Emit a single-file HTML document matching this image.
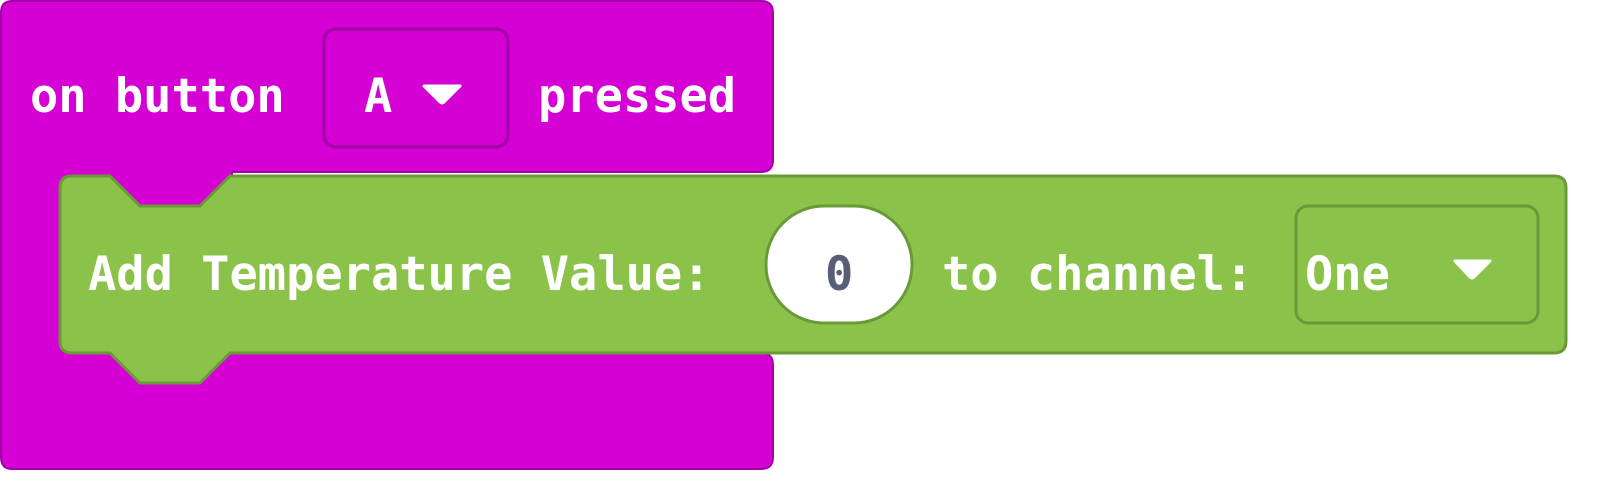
<!DOCTYPE html>
<html><head><style>
html,body{margin:0;padding:0;background:#fff;width:1600px;height:481px;overflow:hidden}
text{font-family:"DejaVu Sans Mono","Liberation Mono",monospace;font-weight:bold;font-size:47px;fill:#fff}
</style></head><body>
<svg width="1600" height="481" viewBox="0 0 1600 481" xmlns="http://www.w3.org/2000/svg">
<path d="M12,1 H761 Q773,1 773,13 V160 Q773,172 761,172 H232 V353 H761 Q773,353 773,365 V457 Q773,469 761,469 H12 Q1,469 1,457 V13 Q1,1 12,1 Z" fill="#d400d4" stroke="#a300a8" stroke-width="2"/>
<rect x="324" y="29" width="184" height="118" rx="12" fill="#d400d4" stroke="#a000a8" stroke-width="3"/>
<text x="30" y="112">on button</text>
<text x="364" y="112">A</text>
<path d="M424,86 H460 L444,102 Q442,104 440,102 Z" fill="#fff" stroke="#fff" stroke-width="3" stroke-linejoin="round"/>
<text x="538" y="112">pressed</text>
<path d="M72,176 H110 L140,206 H200 L230,176 H1554 Q1566,176 1566,188 V341 Q1566,353 1554,353 H230 L200,383 H140 L110,353 H72 Q60,353 60,341 V188 Q60,176 72,176 Z" fill="#8bc34a" stroke="#6a9a38" stroke-width="3"/>
<text x="88" y="290">Add Temperature Value:</text>
<rect x="766" y="206" width="146" height="117" rx="58" fill="#fff" stroke="#6a9a38" stroke-width="3"/>
<text x="825" y="290" style="fill:#575e75">0</text>
<text x="942" y="290">to channel:</text>
<rect x="1296" y="206" width="242" height="117" rx="12" fill="#8bc34a" stroke="#6a9a38" stroke-width="3"/>
<text x="1305" y="290">One</text>
<path d="M1455,261 H1490 L1474,277 Q1472,279 1470,277 Z" fill="#fff" stroke="#fff" stroke-width="3" stroke-linejoin="round"/>
</svg>
</body></html>
